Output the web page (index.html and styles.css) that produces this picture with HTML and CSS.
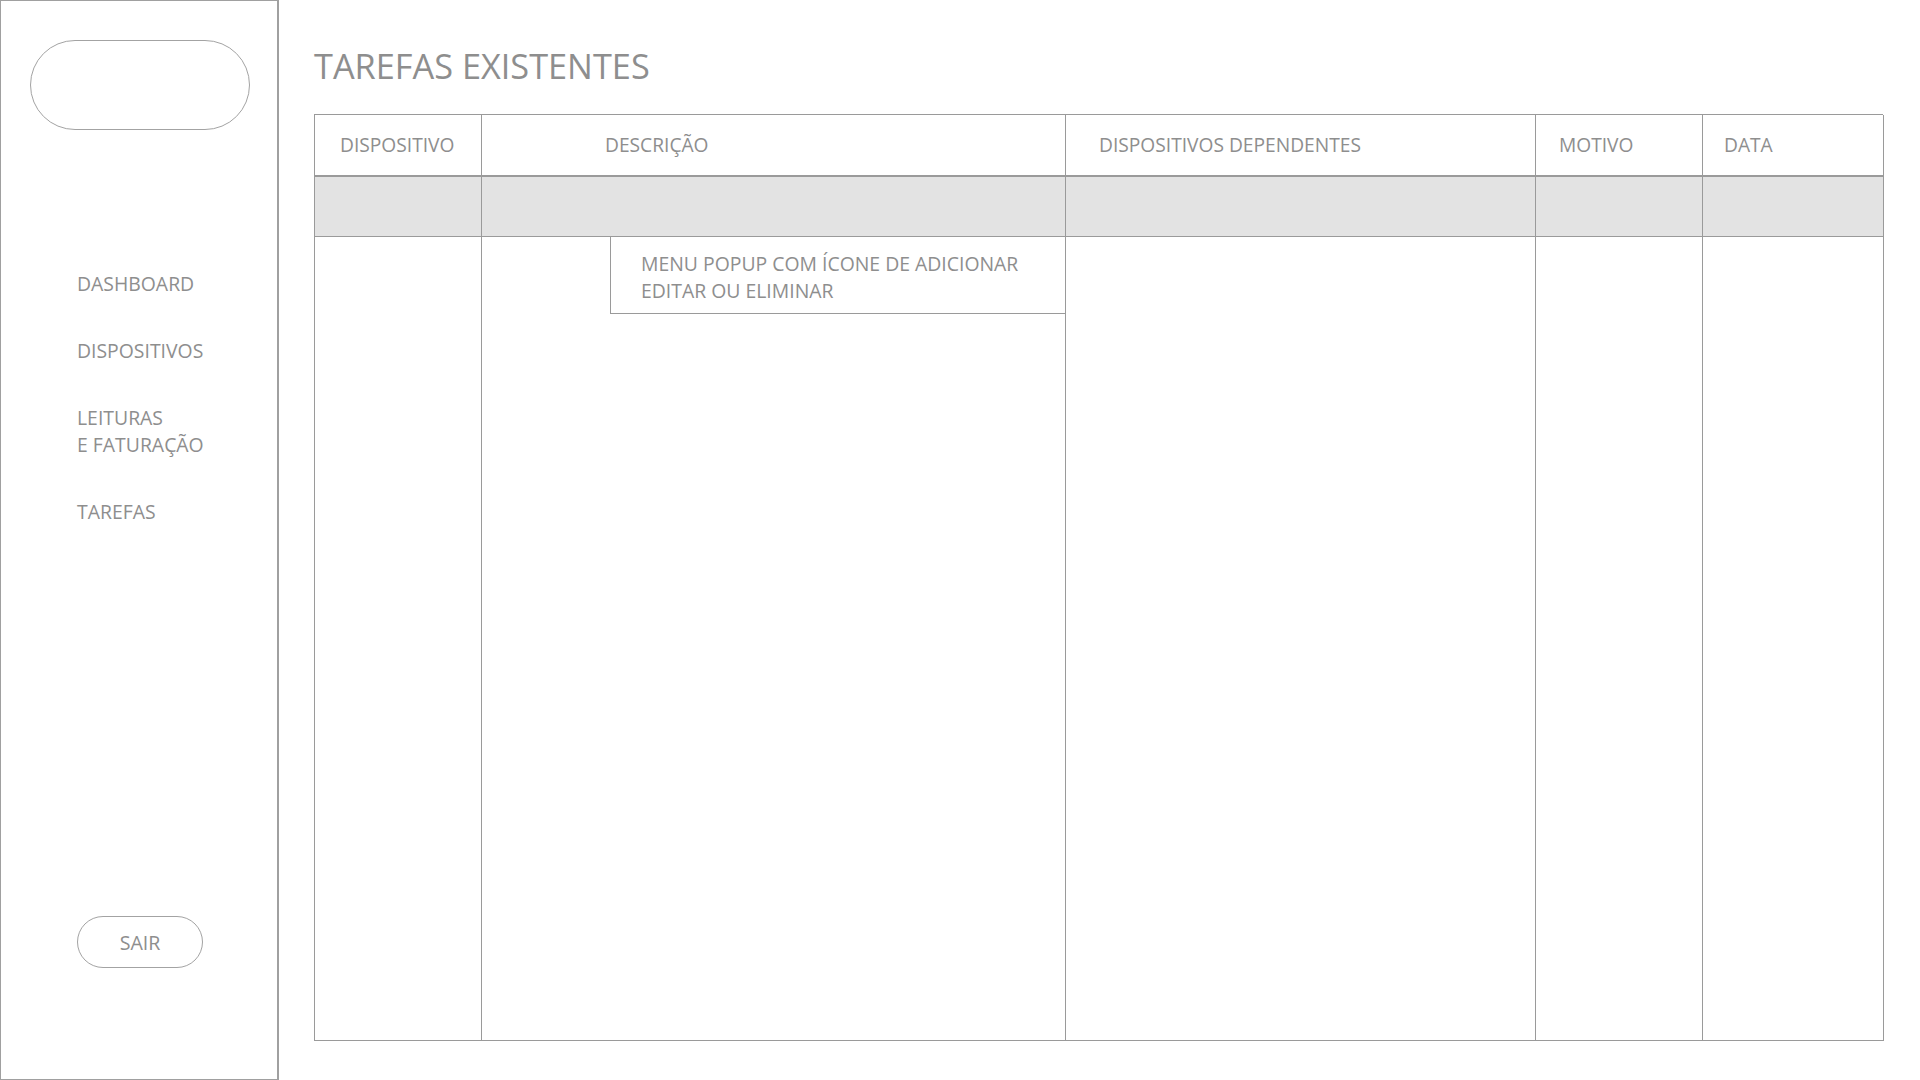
FILE: index.html
```html
<!DOCTYPE html>
<html lang="pt">
<head>
<meta charset="utf-8">
<title>Tarefas Existentes</title>
<link rel="stylesheet" href="styles.css">
</head>
<body>
<div class="app">
  <aside class="sidebar">
    <div class="logo"></div>
    <nav class="nav">
      <a class="nav-item">DASHBOARD</a>
      <a class="nav-item">DISPOSITIVOS</a>
      <a class="nav-item">LEITURAS<br>E FATURAÇÃO</a>
      <a class="nav-item">TAREFAS</a>
    </nav>
    <button class="logout">SAIR</button>
  </aside>
  <main class="main">
    <h1 class="title">TAREFAS EXISTENTES</h1>
    <div class="table">
      <div class="cell head c1">DISPOSITIVO</div>
      <div class="cell head c2">DESCRIÇÃO</div>
      <div class="cell head c3">DISPOSITIVOS DEPENDENTES</div>
      <div class="cell head c4">MOTIVO</div>
      <div class="cell head c5">DATA</div>

      <div class="cell sel"></div>
      <div class="cell sel"></div>
      <div class="cell sel"></div>
      <div class="cell sel"></div>
      <div class="cell sel last"></div>

      <div class="cell body"></div>
      <div class="cell body popup-host">
        <div class="popup">MENU POPUP COM ÍCONE DE ADICIONAR<br>EDITAR OU ELIMINAR</div>
      </div>
      <div class="cell body"></div>
      <div class="cell body"></div>
      <div class="cell body last"></div>
    </div>
  </main>
</div>
</body>
</html>
```

FILE: styles.css
```css
* { box-sizing: border-box; }
html, body {
  margin: 0;
  padding: 0;
  background: #ffffff;
}
body {
  font-family: "Open Sans", "Noto Sans", sans-serif;
  color: #8e8e8e;
}
.app {
  display: flex;
  width: 1920px;
  height: 1080px;
}
.sidebar {
  width: 279px;
  height: 1080px;
  border: 1px solid #a0a0a0;
  border-right-width: 2px;
  display: flex;
  flex-direction: column;
  padding: 39px 0 0 29px;
}
.logo {
  width: 220px;
  height: 90px;
  border: 1px solid #a3a3a3;
  border-radius: 45px;
}
.nav {
  display: flex;
  flex-direction: column;
  gap: 40px;
  margin-top: 140px;
  padding-left: 47px;
}
.nav-item {
  font-size: 19.4px;
  line-height: 27px;
  color: #8e8e8e;
}
.logout {
  margin-top: 391px;
  margin-left: 47px;
  width: 126px;
  height: 52px;
  border: 1px solid #a3a3a3;
  border-radius: 26px;
  background: #fff;
  font-family: inherit;
  font-size: 19.6px;
  color: #8e8e8e;
  padding: 0;
}
.main {
  flex: 1;
  padding-left: 35px;
}
.title {
  margin: 42px 0 0 0;
  font-weight: 400;
  font-size: 34.3px;
  line-height: 48px;
  color: #8e8e8e;
}
.table {
  margin-top: 24px;
  width: 1569px;
  display: grid;
  grid-template-columns: 167px 584px 470px 167px 181px;
  grid-template-rows: 62px 60px 804px;
  border-top: 1px solid #9a9a9a;
  border-left: 1px solid #9a9a9a;
}
.cell {
  border-right: 1px solid #9a9a9a;
  border-bottom: 1px solid #9a9a9a;
}
.head {
  display: flex;
  align-items: center;
  font-size: 19.2px;
  color: #8e8e8e;
  border-bottom-width: 2px;
  padding-bottom: 2px;
}
.c1 { padding-left: 25px; }
.c2 { padding-left: 123px; }
.c3 { padding-left: 33px; }
.c4 { padding-left: 23px; }
.c5 { padding-left: 21px; }
.sel {
  background: #e3e3e3;
}
.body {
  position: relative;
}
.popup {
  position: absolute;
  top: 0;
  left: 128px;
  right: -1px;
  height: 77px;
  border: 1px solid #9a9a9a;
  border-top: none;
  background: #fff;
  padding: 13px 0 0 30px;
  font-size: 19.4px;
  line-height: 27px;
  color: #8e8e8e;
}
```
